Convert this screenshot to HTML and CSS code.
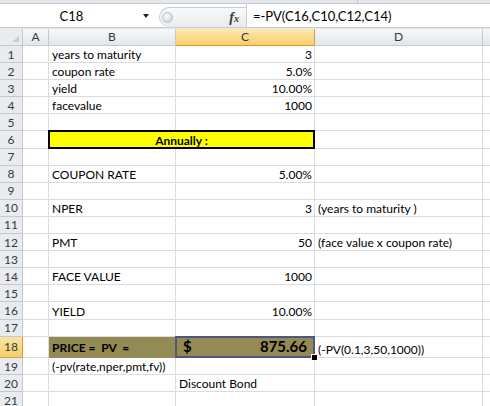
FILE: index.html
```html
<!DOCTYPE html>
<html lang="en">

<head>
    <meta charset="UTF-8">
    <title>Bond price</title>
    <link rel="stylesheet" href="styles.css">
</head>

<body>
    <div class="app">
        <div class="ribbon-edge"><span class="ribbon-split"></span></div>
        <div class="formula-bar">
            <div class="name-box">
                <span class="name">C18</span>
                <span class="drop"></span>
            </div>
            <div class="fx-zone">
                <div class="grip">
                    <span class="knob"></span>
                    <span class="fx"><i>f</i><span class="fx-x">x</span></span>
                </div>
            </div>
            <div class="formula">=-PV(C16,C10,C12,C14)</div>
        </div>
        <div class="bar-gap"></div>

        <div class="sheet">
            <!-- column headers -->
            <div class="corner"></div>
            <div class="ch">A</div>
            <div class="ch">B</div>
            <div class="ch sel">C</div>
            <div class="ch">D</div>
            <div class="ch last"></div>

            <div class="rh">1</div><div class="c"></div><div class="c">years to maturity</div><div class="c num">3</div><div class="c"></div><div class="c last"></div>
            <div class="rh">2</div><div class="c"></div><div class="c">coupon rate</div><div class="c num">5.0%</div><div class="c"></div><div class="c last"></div>
            <div class="rh">3</div><div class="c"></div><div class="c">yield</div><div class="c num">10.00%</div><div class="c"></div><div class="c last"></div>
            <div class="rh">4</div><div class="c"></div><div class="c">facevalue</div><div class="c num">1000</div><div class="c"></div><div class="c last"></div>
            <div class="rh">5</div><div class="c"></div><div class="c"></div><div class="c"></div><div class="c"></div><div class="c last"></div>
            <div class="rh">6</div><div class="c"></div><div class="c band">Annually :</div><div class="c"></div><div class="c last"></div>
            <div class="rh">7</div><div class="c"></div><div class="c"></div><div class="c"></div><div class="c"></div><div class="c last"></div>
            <div class="rh">8</div><div class="c"></div><div class="c">COUPON RATE</div><div class="c num">5.00%</div><div class="c"></div><div class="c last"></div>
            <div class="rh">9</div><div class="c"></div><div class="c"></div><div class="c"></div><div class="c"></div><div class="c last"></div>
            <div class="rh">10</div><div class="c"></div><div class="c">NPER</div><div class="c num">3</div><div class="c">(years to maturity )</div><div class="c last"></div>
            <div class="rh">11</div><div class="c"></div><div class="c"></div><div class="c"></div><div class="c"></div><div class="c last"></div>
            <div class="rh">12</div><div class="c"></div><div class="c">PMT</div><div class="c num">50</div><div class="c">(face value x coupon rate)</div><div class="c last"></div>
            <div class="rh">13</div><div class="c"></div><div class="c"></div><div class="c"></div><div class="c"></div><div class="c last"></div>
            <div class="rh">14</div><div class="c"></div><div class="c">FACE VALUE</div><div class="c num">1000</div><div class="c"></div><div class="c last"></div>
            <div class="rh">15</div><div class="c"></div><div class="c"></div><div class="c"></div><div class="c"></div><div class="c last"></div>
            <div class="rh">16</div><div class="c"></div><div class="c">YIELD</div><div class="c num">10.00%</div><div class="c"></div><div class="c last"></div>
            <div class="rh">17</div><div class="c"></div><div class="c"></div><div class="c"></div><div class="c"></div><div class="c last"></div>
            <div class="rh sel">18</div><div class="c"></div><div class="c olive">PRICE =  PV  =</div><div class="c olive price"><span>$</span><span>875.66</span></div><div class="c">(-PV(0.1,3,50,1000))</div><div class="c last"></div>
            <div class="rh">19</div><div class="c"></div><div class="c">(-pv(rate,nper,pmt,fv))</div><div class="c"></div><div class="c"></div><div class="c last"></div>
            <div class="rh">20</div><div class="c"></div><div class="c"></div><div class="c">Discount Bond</div><div class="c"></div><div class="c last"></div>
            <div class="rh">21</div><div class="c"></div><div class="c"></div><div class="c"></div><div class="c"></div><div class="c last"></div>
        </div>
    </div>
</body>

</html>
```

FILE: styles.css
```css
* {
    box-sizing: border-box;
}

html,
body {
    margin: 0;
    padding: 0;
    background: #fff;
    font-family: "Lato", "Liberation Sans", sans-serif;
    font-size: 12px;
    color: #000;
}

.app {
    width: 490px;
    height: 406px;
    overflow: hidden;
}

/* FORMULA BAR */
.ribbon-edge {
    display: flex;
    height: 4px;
    background: #e4e7eb;
    border-bottom: 1px solid #c3c8ce;
}

.ribbon-split {
    width: 1px;
    margin-left: 357px;
    background: #c3c8ce;
}

.formula-bar {
    display: flex;
    height: 24px;
    background: #fff;
    border-bottom: 1px solid #c9cdd2;
}

.name-box {
    display: flex;
    align-items: center;
    width: 153px;
    padding-right: 4px;
}

.name {
    flex: 1;
    text-align: center;
    font-size: 13px;
}

.drop {
    width: 0;
    height: 0;
    border-left: 3.5px solid transparent;
    border-right: 3.5px solid transparent;
    border-top: 4px solid #222;
    margin-top: 1px;
}

.fx-zone {
    display: flex;
    align-items: flex-end;
    width: 93px;
    padding-left: 6px;
}

.grip {
    flex: 1;
    display: flex;
    align-items: center;
    justify-content: space-between;
    height: 20px;
    padding: 0 7px 0 2px;
    border: 1px solid #c6cbd1;
    border-right: none;
    border-bottom: none;
    border-radius: 10px 0 0 10px;
    background: linear-gradient(#f8f9fa, #e8ebee);
}

.knob {
    width: 11px;
    height: 11px;
    border-radius: 50%;
    border: 1px solid #bcc1c7;
    background: radial-gradient(circle at 40% 35%, #fff, #cfd3d8 75%);
}

.fx {
    font-family: "Liberation Serif", serif;
    font-weight: bold;
    color: #3a3a3a;
}

.fx i {
    font-size: 14px;
}

.fx-x {
    font-size: 10px;
    font-style: italic;
}

.formula {
    flex: 1;
    display: flex;
    align-items: center;
    padding-left: 6px;
    font-size: 13px;
    border-left: 1px solid #c6cbd1;
}

.bar-gap {
    height: 1px;
    background: #e3e6ea;
}

/* SHEET GRID */
.sheet {
    display: grid;
    grid-template-columns: 23px 26px 127px 139px 168px 1fr;
    grid-template-rows: 17px repeat(17, 17.1px) 21.6px repeat(3, 17.1px);
}

.corner,
.ch,
.rh {
    color: #2f3b4a;
    border-right: 1px solid #c5c9cf;
    border-bottom: 1px solid #c5c9cf;
    text-align: center;
}

.corner {
    background: linear-gradient(135deg, transparent 50%, #c9cdd3 50%) no-repeat right 3px bottom 3px / 7px 7px, #e9ebee;
}

.ch {
    line-height: 16px;
    background: linear-gradient(#f7f8fa, #e3e6ea);
}

.ch.sel {
    background: linear-gradient(#fbe9ad, #f7d06a);
    border-right-color: #c9a45a;
    border-bottom: 1px solid #e8912f;
}

.rh {
    display: flex;
    align-items: center;
    justify-content: center;
    background: #e9ebee;
}

.rh.sel {
    background: linear-gradient(#fbe3a0, #f7d06a);
    border-right-color: #e8912f;
    border-bottom-color: #c9a45a;
}

.last {
    border-right: none;
}

.c {
    display: flex;
    align-items: flex-end;
    padding: 0 3px 0;
    line-height: 14px;
    white-space: pre;
    border-right: 1px solid #dadcdd;
    border-bottom: 1px solid #dadcdd;
}

.c.last {
    border-right: none;
}

.num {
    justify-content: flex-end;
    padding-right: 2px;
}

.band {
    grid-column: span 2;
    position: relative;
    justify-content: center;
    font-weight: bold;
    background: #ffff00;
}

.band::before {
    content: "";
    position: absolute;
    inset: -1px;
    border: 2px solid #000;
}

.olive {
    font-weight: bold;
    padding-bottom: 2px;
    background: #948a54;
    border-color: transparent;
}

.price {
    position: relative;
    justify-content: space-between;
    padding: 0 7px 2px 7px;
    font-size: 15px;
    line-height: 18px;
}

.price::before {
    content: "";
    position: absolute;
    inset: -1px;
    border: 2px solid #4f567f;
}

.price::after {
    content: "";
    position: absolute;
    right: -4px;
    bottom: -4px;
    width: 5px;
    height: 5px;
    background: #000;
    border: 1px solid #fff;
}
```
